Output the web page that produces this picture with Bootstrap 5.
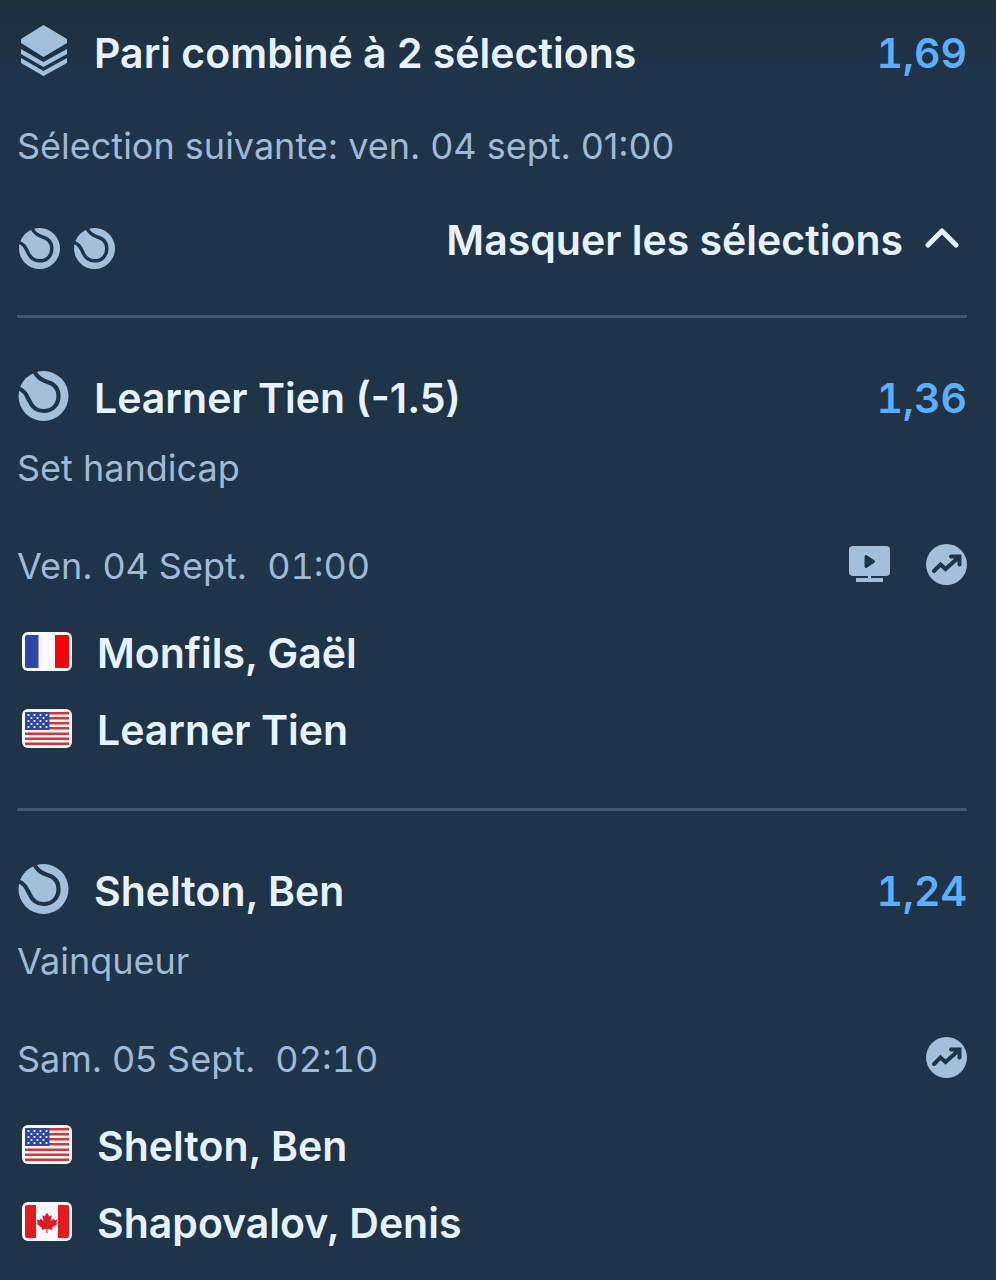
<!DOCTYPE html>
<html lang="fr">
<head>
<meta charset="utf-8">
<meta name="viewport" content="width=device-width, initial-scale=1">
<title>Pari combiné</title>
<link href="https://cdn.jsdelivr.net/npm/bootstrap@5.3.0/dist/css/bootstrap.min.css" rel="stylesheet">
<style>
body{background:#203448 linear-gradient(#1f2e3b,#203448 72px) no-repeat;color:#e8f2fd;font-family:Inter,"Liberation Sans",sans-serif;font-size:41px;line-height:52px;font-weight:600}
.slip{padding:27px 29px 32px 17px}
.heading{font-size:41px;line-height:52px;font-weight:600;gap:24px}
.heading svg,.team svg,.icons svg{margin-top:-4px}
.muted{color:#9fbad4;font-size:36px;line-height:44px;font-weight:400}
.odds{color:#5caeff}
.odds,.hour{font-variant-numeric:tabular-nums}
.glyph{color:#a3c0da;flex:none}
.next{margin-top:45px}
.toolbar{margin-top:46px;padding-bottom:46px;border-bottom:3px solid #42586d}
.sports{gap:14px;padding:14px 0 0 2px}
.toggle{gap:22px;padding-right:8px;color:inherit;background:none;border:0;font-weight:600;margin-top:-4px}
.toggle svg{margin-top:-4px}
.leg{padding-top:54px}
.leg + .leg{margin-top:52px;border-top:3px solid #42586d}
.market{margin-top:22px}
.when{margin-top:54px}
.day{margin-right:20px}
.icons{gap:36px}
.teams{margin-top:39px;gap:25px}
.team{gap:25px;padding-left:5px}
</style>
</head>
<body>
<svg class="d-none" xmlns="http://www.w3.org/2000/svg">
<symbol id="ball" viewBox="0 0 50 50"><circle cx="25" cy="25" r="25" fill="currentColor"/><path d="M-1 17C6 19 8 24 11 30C14 37 18 40 25 40C34 40 40 34 40 25C40 18 36 13 29 11C23 9 19 7 15 -1" fill="none" stroke="#203448" stroke-width="4.200"/></symbol>
<symbol id="tv" viewBox="0 0 41 36"><rect width="41" height="30" rx="4" fill="currentColor"/><path d="M19 29h3v3h12v4H7v-4h12z" fill="currentColor"/><path d="M17 10.500l7.500 5-7.500 5z" fill="#203448" stroke="#203448" stroke-width="3" stroke-linejoin="round"/></symbol>
<symbol id="trend" viewBox="0 0 41 41"><circle cx="20.500" cy="20.500" r="20.500" fill="currentColor"/><path d="M8 27l6.500-6.500 5 4.500L33 13M25 12.500h8.500v8" fill="none" stroke="#203448" stroke-width="4" stroke-linecap="round"/></symbol>
<symbol id="us" viewBox="0 0 50 39"><rect width="50" height="39" rx="6" fill="#f5f8fd"/><path d="M3 4.200h44M3 9.200h44M3 14.200h44M3 19.200h44M3 24.700h44M3 29.700h44M3 34.700h44" stroke="#d93338" stroke-width="2.400"/><path d="M3 5a2 2 0 0 1 2-2h22.500v18H3z" fill="#3345a4"/><g fill="none" stroke="#fff" stroke-width="2.200" stroke-linecap="round" stroke-dasharray="0 6"><path d="M6.500 6h19M6.500 12h19M6.500 18h19M9.500 9h16M9.500 15h16"/></g></symbol>
<symbol id="fr" viewBox="0 0 50 39"><rect width="50" height="39" rx="6" fill="#f8f9fe"/><path d="M16.500 3v33H5a2 2 0 0 1-2-2V5a2 2 0 0 1 2-2z" fill="#3043a8"/><path d="M33 3h12a2 2 0 0 1 2 2v29a2 2 0 0 1-2 2H33z" fill="#fb0007"/></symbol>
<symbol id="ca" viewBox="0 0 50 39"><rect width="50" height="39" rx="6" fill="#f8f9fc"/><path d="M14 3v33H5a2 2 0 0 1-2-2V5a2 2 0 0 1 2-2zM36 3h9a2 2 0 0 1 2 2v29a2 2 0 0 1-2 2h-9z" fill="#e5191f"/><path d="M25 10.500l-2.300 4-2.500-1.200 1.300 6-3-2.800-.6 1.700-3.200-.6 1 3.300-1.200.8 5.500 4-.6 2 5.200-.8-.2 4h1.200l-.2-4 5.200.8-.6-2 5.500-4-1.200-.8 1-3.300-3.200.6-.6-1.700-3 2.800 1.300-6-2.500 1.200z" fill="#e5191f"/></symbol>
</svg>
<main class="slip">
<header>
<div class="d-flex justify-content-between align-items-center">
<h1 class="heading d-flex align-items-center mb-0"><svg class="glyph" width="53" height="52" viewBox="-3 0 53 52" aria-hidden="true"><path d="M23.500 0L47 14v4L23.500 32 1 18v-4zM1 24l22.500 13L47 24v5L23.500 42 1 29zM1 33l22.500 13L47 33v5L23.500 51 1 38z" fill="currentColor"/></svg>Pari combiné à 2 sélections</h1>
<span class="odds">1,69</span>
</div>
<p class="muted next mb-0">Sélection suivante: ven. 04 sept. 01:00</p>
<div class="toolbar d-flex justify-content-between align-items-center">
<div class="glyph sports d-flex align-items-center"><svg width="41" height="41" aria-hidden="true"><use href="#ball"/></svg><svg width="41" height="41" aria-hidden="true"><use href="#ball"/></svg></div>
<button type="button" class="toggle d-flex align-items-center py-0 ps-0" aria-expanded="true">Masquer les sélections<svg width="34" height="22" viewBox="0 0 34 22" aria-hidden="true"><path d="M3 18L17 4l14 14" fill="none" stroke="currentColor" stroke-width="5" stroke-linecap="round" stroke-linejoin="round"/></svg></button>
</div>
</header>
<section class="leg">
<div class="d-flex justify-content-between align-items-center">
<h2 class="heading d-flex align-items-center mb-0"><svg class="glyph" width="53" height="50" aria-hidden="true"><use href="#ball"/></svg>Learner Tien (-1.5)</h2>
<span class="odds">1,36</span>
</div>
<p class="muted market mb-0">Set handicap</p>
<div class="muted when d-flex justify-content-between align-items-center">
<div class="d-flex flex-wrap"><span class="day">Ven. 04 Sept.</span><span class="hour">01:00</span></div>
<div class="glyph icons d-flex align-items-center"><svg width="41" height="36" role="img" aria-label="Vidéo"><use href="#tv"/></svg><svg width="41" height="41" role="img" aria-label="Statistiques"><use href="#trend"/></svg></div>
</div>
<ul class="teams list-unstyled d-flex flex-column mb-0">
<li class="team d-flex align-items-center"><svg width="50" height="39" aria-hidden="true"><use href="#fr"/></svg>Monfils, Gaël</li>
<li class="team d-flex align-items-center"><svg width="50" height="39" aria-hidden="true"><use href="#us"/></svg>Learner Tien</li>
</ul>
</section>
<section class="leg">
<div class="d-flex justify-content-between align-items-center">
<h2 class="heading d-flex align-items-center mb-0"><svg class="glyph" width="53" height="50" aria-hidden="true"><use href="#ball"/></svg>Shelton, Ben</h2>
<span class="odds">1,24</span>
</div>
<p class="muted market mb-0">Vainqueur</p>
<div class="muted when d-flex justify-content-between align-items-center">
<div class="d-flex flex-wrap"><span class="day">Sam. 05 Sept.</span><span class="hour">02:10</span></div>
<div class="glyph icons d-flex align-items-center"><svg width="41" height="41" role="img" aria-label="Statistiques"><use href="#trend"/></svg></div>
</div>
<ul class="teams list-unstyled d-flex flex-column mb-0">
<li class="team d-flex align-items-center"><svg width="50" height="39" aria-hidden="true"><use href="#us"/></svg>Shelton, Ben</li>
<li class="team d-flex align-items-center"><svg width="50" height="39" aria-hidden="true"><use href="#ca"/></svg>Shapovalov, Denis</li>
</ul>
</section>
</main>
<script src="https://cdn.jsdelivr.net/npm/bootstrap@5.3.0/dist/js/bootstrap.bundle.min.js"></script>
</body>
</html>
